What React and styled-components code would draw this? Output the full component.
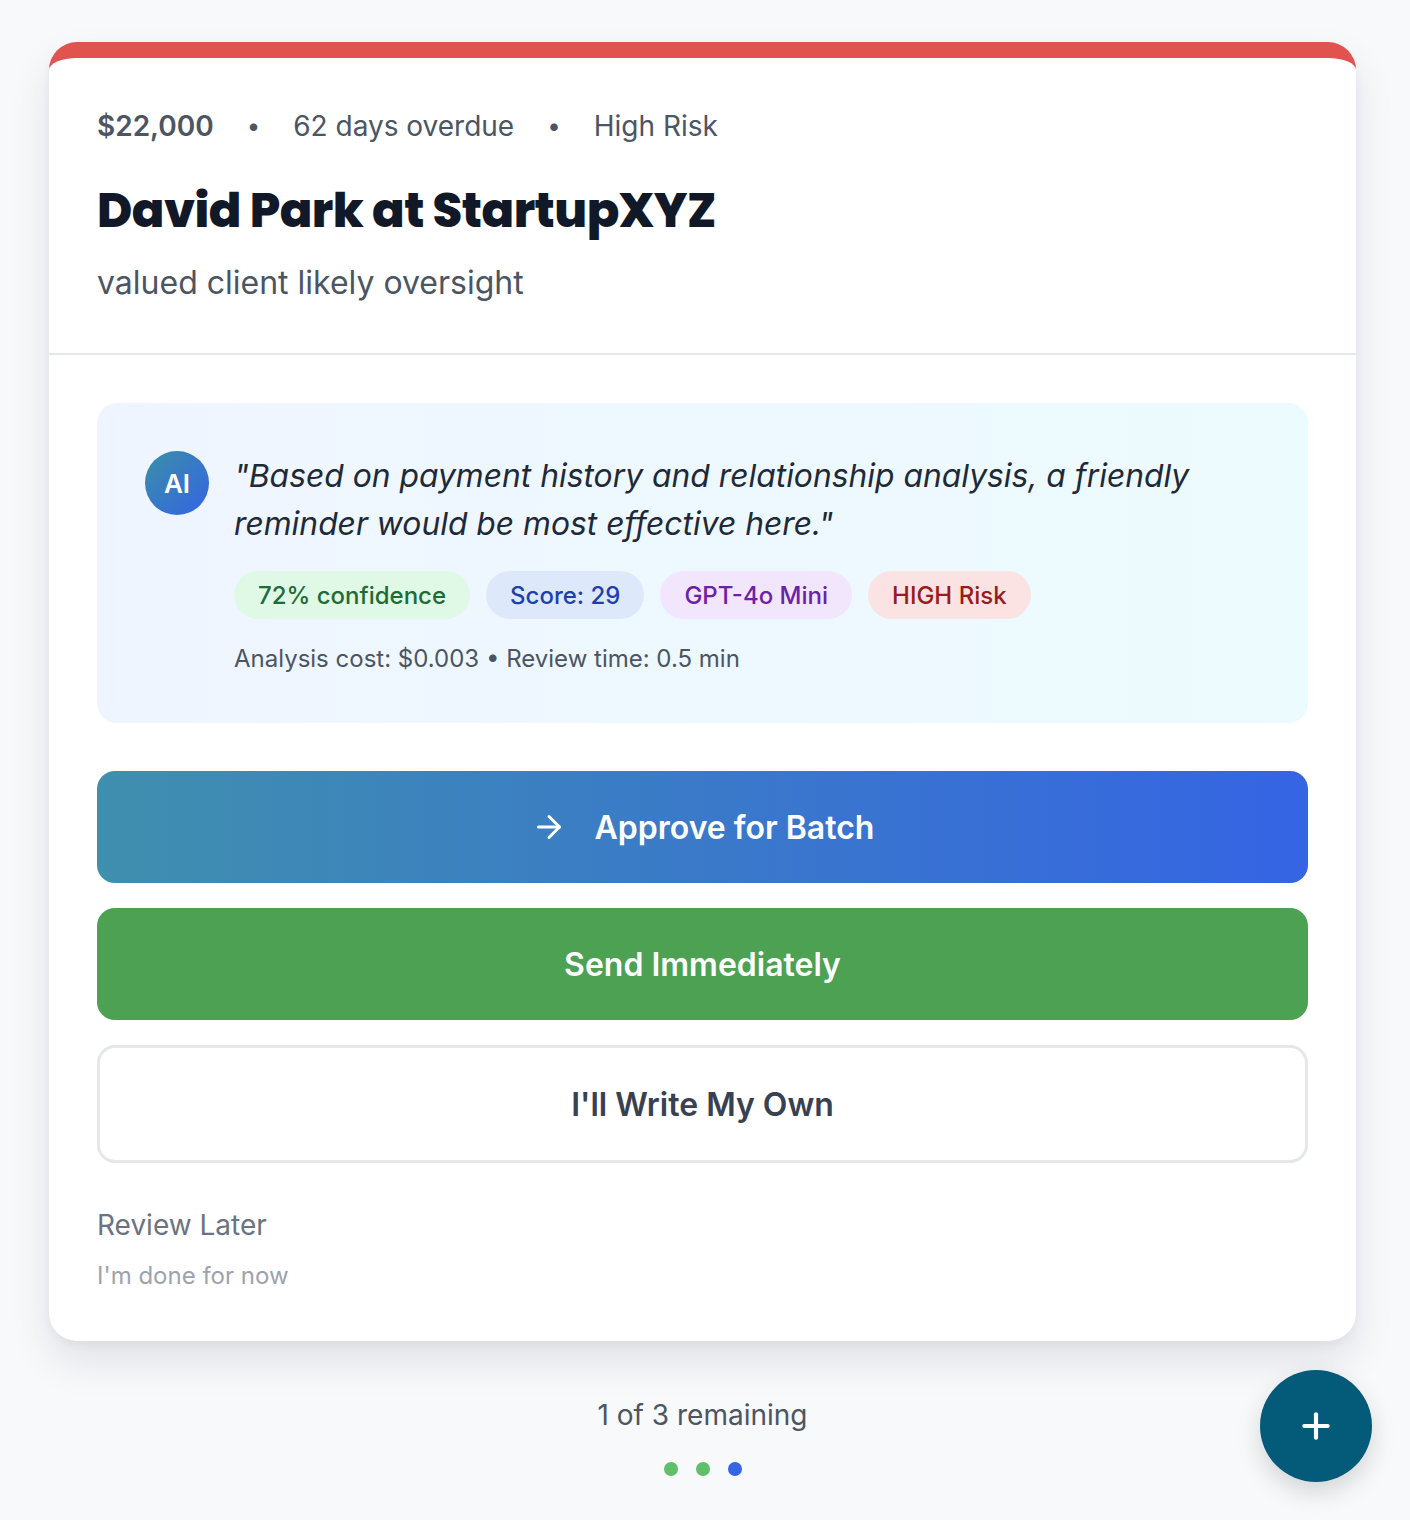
import React from "react";
import styled, { createGlobalStyle } from "styled-components";
import { ArrowRight, Plus } from "lucide-react";

const GlobalStyle = createGlobalStyle`
  body {
    margin: 0;
    background: #f8f9fb;
    font-family: Inter, "Noto Sans", "Liberation Sans", sans-serif;
    color: #111827;
  }
`;

const Page = styled.div`
  padding: 42px 54px 40px 49px;
  min-height: 1520px;
  box-sizing: border-box;
`;

const Card = styled.div`
  background: #ffffff;
  border-top: 16px solid #e0534f;
  border-radius: 28px;
  box-shadow: 0 20px 40px rgba(17, 24, 39, 0.1), 0 4px 10px rgba(17, 24, 39, 0.04);
`;

const Header = styled.div`
  padding: 48px 48px 48px;
  border-bottom: 2px solid #e5e7eb;
`;

const MetaRow = styled.div`
  display: flex;
  align-items: center;
  gap: 33px;
  font-size: 28px;
  line-height: 40px;
  color: #4b5563;
`;

const Amount = styled.span`
  font-weight: 600;
`;

const Dot = styled.span`
  font-size: 24px;
`;

const Title = styled.h1`
  margin: 35px 0 0;
  font-family: Poppins, Inter, "Noto Sans", sans-serif;
  font-size: 48px;
  line-height: 60px;
  font-weight: 800;
  letter-spacing: -0.5px;
  color: #111827;
`;

const Subtitle = styled.p`
  margin: 20px 0 0;
  font-size: 32px;
  line-height: 44px;
  color: #4b5563;
`;

const Body = styled.div`
  padding: 48px 48px 49px;
`;

const InsightBox = styled.div`
  display: flex;
  gap: 25px;
  padding: 48px;
  border-radius: 20px;
  background: linear-gradient(90deg, #eff5ff 0%, #ecfbfe 100%);
`;

const Avatar = styled.div`
  flex: 0 0 64px;
  width: 64px;
  height: 64px;
  border-radius: 50%;
  background: linear-gradient(135deg, #3a8fa8 0%, #3564e4 100%);
  color: #ffffff;
  font-size: 26px;
  font-weight: 600;
  display: flex;
  align-items: center;
  justify-content: center;
`;

const InsightContent = styled.div`
  flex: 1;
`;

const Quote = styled.p`
  margin: 1px 0 0;
  font-size: 31.8px;
  line-height: 48px;
  font-style: italic;
  color: #1f2937;
`;

const BadgeRow = styled.div`
  display: flex;
  gap: 16px;
  margin-top: 23px;
`;

const Badge = styled.span`
  display: inline-flex;
  align-items: center;
  height: 48px;
  padding: 0 24px;
  border-radius: 24px;
  font-size: 24px;
  font-weight: 500;
  background: ${(p) => p.$bg};
  color: ${(p) => p.$fg};
`;

const CostLine = styled.div`
  margin-top: 24px;
  font-size: 24px;
  line-height: 32px;
  color: #4b5563;
`;

const Actions = styled.div`
  display: flex;
  flex-direction: column;
  gap: 25px;
  margin-top: 48px;
`;

const ActionButton = styled.button`
  display: flex;
  align-items: center;
  justify-content: center;
  gap: 28px;
  width: 100%;
  height: ${(p) => (p.$outline ? "118px" : "112px")};
  border-radius: 18px;
  border: ${(p) => (p.$outline ? "3px solid #e5e7eb" : "none")};
  background: ${(p) => p.$bg};
  color: ${(p) => (p.$outline ? "#374151" : "#ffffff")};
  font-family: inherit;
  font-size: 32px;
  font-weight: 600;
  cursor: pointer;
`;

const LaterBlock = styled.div`
  margin-top: 42px;
`;

const LaterTitle = styled.div`
  font-size: 28px;
  line-height: 40px;
  color: #6b7280;
`;

const LaterSub = styled.div`
  margin-top: 15px;
  font-size: 24px;
  line-height: 32px;
  color: #9ca3af;
`;

const Footer = styled.div`
  display: flex;
  flex-direction: column;
  align-items: center;
  margin-top: 54px;
`;

const Remaining = styled.div`
  font-size: 28px;
  line-height: 40px;
  color: #4b5563;
`;

const Dots = styled.div`
  display: flex;
  gap: 18px;
  margin-top: 27px;
`;

const ProgressDot = styled.span`
  width: 14px;
  height: 14px;
  border-radius: 50%;
  background: ${(p) => p.$color};
`;

const Fab = styled.button`
  position: fixed;
  right: 38px;
  bottom: 38px;
  width: 112px;
  height: 112px;
  border-radius: 50%;
  border: none;
  background: #035a79;
  color: #ffffff;
  display: flex;
  align-items: center;
  justify-content: center;
  box-shadow: 0 10px 24px rgba(0, 0, 0, 0.15);
  cursor: pointer;
`;

const badges = [
  { label: "72% confidence", bg: "#e0f8e6", fg: "#1f6b35" },
  { label: "Score: 29", bg: "#dde8fb", fg: "#1e40af" },
  { label: "GPT-4o Mini", bg: "#f2e6fd", fg: "#6b21a8" },
  { label: "HIGH Risk", bg: "#fbe3e3", fg: "#991b1b" },
];

export default function App() {
  return (
    <>
      <GlobalStyle />
      <Page>
        <Card>
          <Header>
            <MetaRow>
              <Amount>$22,000</Amount>
              <Dot>•</Dot>
              <span>62 days overdue</span>
              <Dot>•</Dot>
              <span>High Risk</span>
            </MetaRow>
            <Title>David Park at StartupXYZ</Title>
            <Subtitle>valued client likely oversight</Subtitle>
          </Header>
          <Body>
            <InsightBox>
              <Avatar>AI</Avatar>
              <InsightContent>
                <Quote>
                  "Based on payment history and relationship analysis, a friendly
                  reminder would be most effective here."
                </Quote>
                <BadgeRow>
                  {badges.map((b) => (
                    <Badge key={b.label} $bg={b.bg} $fg={b.fg}>
                      {b.label}
                    </Badge>
                  ))}
                </BadgeRow>
                <CostLine>Analysis cost: $0.003 • Review time: 0.5 min</CostLine>
              </InsightContent>
            </InsightBox>

            <Actions>
              <ActionButton $bg="linear-gradient(90deg, #3f8fae 0%, #3564e4 100%)">
                <ArrowRight size={36} strokeWidth={2} />
                Approve for Batch
              </ActionButton>
              <ActionButton $bg="#4ca153">Send Immediately</ActionButton>
              <ActionButton $outline $bg="#ffffff">
                I'll Write My Own
              </ActionButton>
            </Actions>

            <LaterBlock>
              <LaterTitle>Review Later</LaterTitle>
              <LaterSub>I'm done for now</LaterSub>
            </LaterBlock>
          </Body>
        </Card>

        <Footer>
          <Remaining>1 of 3 remaining</Remaining>
          <Dots>
            <ProgressDot $color="#5fbf6b" />
            <ProgressDot $color="#5fbf6b" />
            <ProgressDot $color="#3564e4" />
          </Dots>
        </Footer>
      </Page>
      <Fab>
        <Plus size={40} strokeWidth={2.5} />
      </Fab>
    </>
  );
}
